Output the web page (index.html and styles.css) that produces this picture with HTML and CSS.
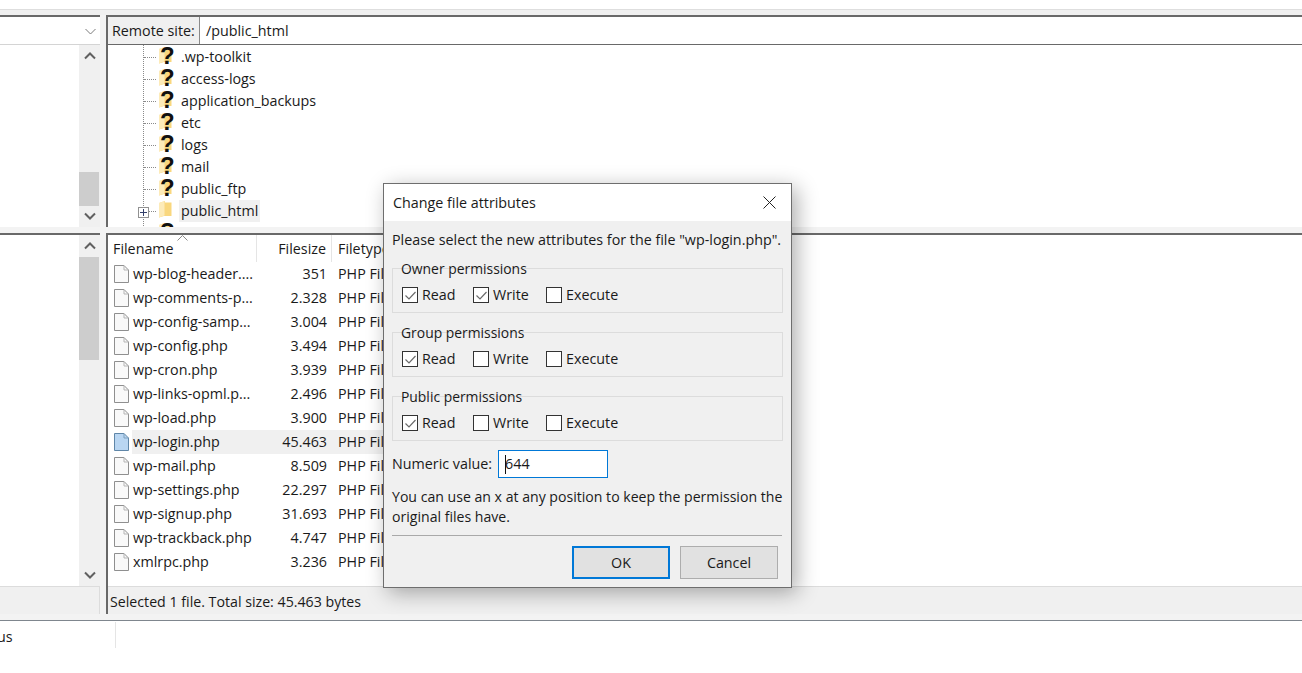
FILE: index.html
```html
<!DOCTYPE html>
<html lang="en">
<head>
<meta charset="utf-8">
<title>Change file attributes</title>
<link rel="stylesheet" href="styles.css">
</head>
<body>
<svg class="defs" width="0" height="0" aria-hidden="true">
  <symbol id="folder" viewBox="0 0 13 17">
    <path d="M0 2 L6 0 L6 1.5 L12.5 1.5 L12.5 15 L5 15 L0 16.5 Z" fill="#f9d77e"/>
    <path d="M0 2 L5.5 0 L5.5 14.5 L0 16.5 Z" fill="#fdebb9"/>
  </symbol>
  <symbol id="file" viewBox="0 0 15 18">
    <path d="M.5.5 H10 L14.5 5 V17.5 H.5 Z" fill="#f9f9f9" stroke="#8f8f8f"/>
    <path d="M10 .5 V5 H14.5" fill="none" stroke="#b5b5b5"/>
  </symbol>
  <symbol id="file-sel" viewBox="0 0 15 18">
    <path d="M.5.5 H10 L14.5 5 V17.5 H.5 Z" fill="#b9d6f2" stroke="#5f86a8"/>
    <path d="M10 .5 V5 H14.5" fill="none" stroke="#7d9fbd"/>
  </symbol>
  <symbol id="up" viewBox="0 0 12 8"><path d="M1 6.5 L6 1.5 L11 6.5" fill="none" stroke="#606060" stroke-width="2"/></symbol>
  <symbol id="down" viewBox="0 0 12 8"><path d="M1 1.5 L6 6.5 L11 1.5" fill="none" stroke="#606060" stroke-width="2"/></symbol>
  <symbol id="tick" viewBox="0 0 15 15"><path d="M2.5 7.5 L6 11 L12.5 4" fill="none" stroke="#6b6b6b" stroke-width="1.2"/></symbol>
</svg>

<div class="topstrip"></div>

<main class="panes">
  <section class="pane pane-local-top">
    <div class="addr addr-local">
      <svg class="combo-arrow" width="11" height="7" viewBox="0 0 11 7"><path d="M.5 1 L5.5 6 L10.5 1" fill="none" stroke="#7a7a7a"/></svg>
    </div>
    <div class="local-body">
      <div class="blank"></div>
      <div class="scrollbar">
        <svg class="sb-arrow" width="12" height="8"><use href="#up"/></svg>
        <div class="thumb-slot thumb-slot-tree"><div class="thumb thumb-tree"></div></div>
        <svg class="sb-arrow" width="12" height="8"><use href="#down"/></svg>
      </div>
    </div>
  </section>

  <section class="pane pane-remote-top">
    <div class="addr">
      <span class="addr-label">Remote site:</span>
      <span class="addr-value">/public_html</span>
    </div>
    <div class="tree">
      <div class="tree-row"><i class="dots"></i><span class="folder-q"><svg width="13" height="17"><use href="#folder"/></svg><b>?</b></span><span class="tree-name">.wp-toolkit</span></div>
      <div class="tree-row"><i class="dots"></i><span class="folder-q"><svg width="13" height="17"><use href="#folder"/></svg><b>?</b></span><span class="tree-name">access-logs</span></div>
      <div class="tree-row"><i class="dots"></i><span class="folder-q"><svg width="13" height="17"><use href="#folder"/></svg><b>?</b></span><span class="tree-name">application_backups</span></div>
      <div class="tree-row"><i class="dots"></i><span class="folder-q"><svg width="13" height="17"><use href="#folder"/></svg><b>?</b></span><span class="tree-name">etc</span></div>
      <div class="tree-row"><i class="dots"></i><span class="folder-q"><svg width="13" height="17"><use href="#folder"/></svg><b>?</b></span><span class="tree-name">logs</span></div>
      <div class="tree-row"><i class="dots"></i><span class="folder-q"><svg width="13" height="17"><use href="#folder"/></svg><b>?</b></span><span class="tree-name">mail</span></div>
      <div class="tree-row"><i class="dots"></i><span class="folder-q"><svg width="13" height="17"><use href="#folder"/></svg><b>?</b></span><span class="tree-name">public_ftp</span></div>
      <div class="tree-row"><i class="dots"></i><span class="plus"></span><span class="folder-q"><svg width="13" height="17"><use href="#folder"/></svg></span><span class="tree-name tree-sel">public_html</span></div>
      <div class="tree-row"><i class="dots"></i><span class="folder-q"><svg width="13" height="17"><use href="#folder"/></svg><b>?</b></span></div>
    </div>
  </section>

  <section class="pane pane-local-bottom">
    <div class="local-body">
      <div class="blank"></div>
      <div class="scrollbar">
        <svg class="sb-arrow" width="12" height="8"><use href="#up"/></svg>
        <div class="thumb-slot thumb-slot-list"><div class="thumb thumb-list"></div></div>
        <svg class="sb-arrow" width="12" height="8"><use href="#down"/></svg>
      </div>
    </div>
    <div class="statusbar statusbar-local"></div>
  </section>

  <section class="pane pane-remote-bottom">
    <div class="list">
      <div class="list-head">
        <span class="col-name">Filename<svg class="sort" width="11" height="6" viewBox="0 0 11 6"><path d="M.5 5.5 L5.5 .5 L10.5 5.5" fill="none" stroke="#8a8a8a"/></svg></span>
        <span class="col-size">Filesize</span>
        <span class="col-type">Filetype</span>
      </div>
      <div class="list-row"><svg width="15" height="18"><use href="#file"/></svg><span class="fname">wp-blog-header....</span><span class="fsize">351</span><span class="ftype">PHP File</span></div>
      <div class="list-row"><svg width="15" height="18"><use href="#file"/></svg><span class="fname">wp-comments-p...</span><span class="fsize">2.328</span><span class="ftype">PHP File</span></div>
      <div class="list-row"><svg width="15" height="18"><use href="#file"/></svg><span class="fname">wp-config-samp...</span><span class="fsize">3.004</span><span class="ftype">PHP File</span></div>
      <div class="list-row"><svg width="15" height="18"><use href="#file"/></svg><span class="fname">wp-config.php</span><span class="fsize">3.494</span><span class="ftype">PHP File</span></div>
      <div class="list-row"><svg width="15" height="18"><use href="#file"/></svg><span class="fname">wp-cron.php</span><span class="fsize">3.939</span><span class="ftype">PHP File</span></div>
      <div class="list-row"><svg width="15" height="18"><use href="#file"/></svg><span class="fname">wp-links-opml.p...</span><span class="fsize">2.496</span><span class="ftype">PHP File</span></div>
      <div class="list-row"><svg width="15" height="18"><use href="#file"/></svg><span class="fname">wp-load.php</span><span class="fsize">3.900</span><span class="ftype">PHP File</span></div>
      <div class="list-row list-row-sel"><svg width="15" height="18"><use href="#file-sel"/></svg><span class="fname">wp-login.php</span><span class="fsize">45.463</span><span class="ftype">PHP File</span></div>
      <div class="list-row"><svg width="15" height="18"><use href="#file"/></svg><span class="fname">wp-mail.php</span><span class="fsize">8.509</span><span class="ftype">PHP File</span></div>
      <div class="list-row"><svg width="15" height="18"><use href="#file"/></svg><span class="fname">wp-settings.php</span><span class="fsize">22.297</span><span class="ftype">PHP File</span></div>
      <div class="list-row"><svg width="15" height="18"><use href="#file"/></svg><span class="fname">wp-signup.php</span><span class="fsize">31.693</span><span class="ftype">PHP File</span></div>
      <div class="list-row"><svg width="15" height="18"><use href="#file"/></svg><span class="fname">wp-trackback.php</span><span class="fsize">4.747</span><span class="ftype">PHP File</span></div>
      <div class="list-row"><svg width="15" height="18"><use href="#file"/></svg><span class="fname">xmlrpc.php</span><span class="fsize">3.236</span><span class="ftype">PHP File</span></div>
    </div>
    <div class="statusbar">Selected 1 file. Total size: 45.463 bytes</div>
  </section>
</main>

<footer class="queue">
  <div class="queue-tab">us</div>
</footer>

<div class="dialog" role="dialog">
  <header class="dialog-title">
    <span>Change file attributes</span>
    <svg class="close" width="13" height="13" viewBox="0 0 13 13"><path d="M.5.5 L12.5 12.5 M12.5.5 L.5 12.5" stroke="#222" fill="none"/></svg>
  </header>
  <div class="dialog-body">
    <p class="intro">Please select the new attributes for the file "wp-login.php".</p>
    <fieldset class="perm">
      <legend>Owner permissions</legend>
      <label class="chk chk-r"><span class="box"><svg width="15" height="15"><use href="#tick"/></svg></span>Read</label>
      <label class="chk chk-w"><span class="box"><svg width="15" height="15"><use href="#tick"/></svg></span>Write</label>
      <label class="chk"><span class="box"></span>Execute</label>
    </fieldset>
    <fieldset class="perm">
      <legend>Group permissions</legend>
      <label class="chk chk-r"><span class="box"><svg width="15" height="15"><use href="#tick"/></svg></span>Read</label>
      <label class="chk chk-w"><span class="box"></span>Write</label>
      <label class="chk"><span class="box"></span>Execute</label>
    </fieldset>
    <fieldset class="perm">
      <legend>Public permissions</legend>
      <label class="chk chk-r"><span class="box"><svg width="15" height="15"><use href="#tick"/></svg></span>Read</label>
      <label class="chk chk-w"><span class="box"></span>Write</label>
      <label class="chk"><span class="box"></span>Execute</label>
    </fieldset>
    <div class="numeric">
      <span>Numeric value:</span>
      <span class="num-input"><i class="caret"></i>644</span>
    </div>
    <p class="hint">You can use an x at any position to keep the permission the original files have.</p>
    <div class="actions">
      <button class="btn btn-default" type="button">OK</button>
      <button class="btn" type="button">Cancel</button>
    </div>
  </div>
</div>
</body>
</html>
```

FILE: styles.css
```css
* { box-sizing: border-box; }
html, body { margin: 0; padding: 0; }
body {
  width: 1302px;
  height: 673px;
  overflow: hidden;
  position: relative;
  background: #fff;
  color: #1a1a1a;
  font: 14.3px/20px "Open Sans", "Noto Sans", sans-serif;
}
.defs { position: absolute; }

.topstrip {
  margin-top: 9px;
  height: 6px;
  background: #f0f0f0;
  border-top: 1px solid #dedede;
}

.panes {
  display: grid;
  grid-template-columns: 100px 1196px;
  grid-template-rows: 212px 381px;
  column-gap: 6px;
  row-gap: 6px;
  padding-bottom: 6px;
  background: #f3f3f3;
  height: 605px;
  width: 1302px;
}
.pane {
  background: #fff;
  border-top: 2px solid #696969;
  overflow: hidden;
  display: flex;
  flex-direction: column;
}
.pane-remote-top, .pane-remote-bottom { border-left: 2px solid #696969; }

.addr {
  height: 28px;
  flex: none;
  display: flex;
  border-bottom: 1px solid #696969;
  background: #fff;
  position: relative;
}
.addr-local { border-bottom-color: #d4d4d4; }
.combo-arrow { position: absolute; right: 4px; top: 11px; }
.addr-label {
  width: 92px;
  padding: 4px 0 0 4px;
  background: #f0f0f0;
  border-right: 1px solid #8a8a8a;
  white-space: nowrap;
}
.addr-value { padding: 4px 0 0 6px; }

.local-body { flex: 1; display: flex; min-height: 0; }
.blank { flex: 1; }
.scrollbar {
  width: 21px;
  background: #f0f0f0;
  display: flex;
  flex-direction: column;
  align-items: center;
  padding: 7px 0;
}
.sb-arrow { flex: none; }
.thumb-slot { flex: 1; width: 100%; display: flex; flex-direction: column; }
.thumb { background: #cdcdcd; margin-right: 1px; }
.thumb-slot-tree { justify-content: flex-end; padding-bottom: 6px; }
.thumb-tree { height: 34px; }
.thumb-slot-list { padding-top: 7px; }
.thumb-list { height: 103px; }

.tree {
  flex: 1;
  overflow: hidden;
  padding-top: 1px;
  position: relative;
  background-image: linear-gradient(#8a8a8a 50%, transparent 50%);
  background-size: 1px 2px;
  background-repeat: repeat-y;
  background-position: 35px 0;
}
.tree-row {
  height: 22px;
  display: flex;
  align-items: center;
  position: relative;
  padding-left: 51px;
}
.dots {
  position: absolute;
  left: 36px;
  top: 11px;
  width: 12px;
  border-top: 1px dotted #8a8a8a;
}
.folder-q {
  position: relative;
  width: 13px;
  height: 17px;
  flex: none;
  align-self: flex-start;
  margin-top: 1px;
}
.folder-q svg { display: block; }
.folder-q b {
  position: absolute;
  left: 1px;
  top: -4px;
  width: 14px;
  text-align: center;
  font: bold 24px/26px "Liberation Sans", sans-serif;
  color: #111;
}
.tree-name { margin-left: 7px; padding: 0 2px; line-height: 22px; }
.tree-sel { background: #f0f0f0; }
.plus {
  position: absolute;
  left: 30px;
  top: 7px;
  width: 11px;
  height: 11px;
  border: 1px solid #919191;
  background:
    linear-gradient(#33406b, #33406b) center / 7px 1px no-repeat,
    linear-gradient(#33406b, #33406b) center / 1px 7px no-repeat,
    #fff;
}

.list { flex: 1; min-height: 0; overflow: hidden; }
.list-head {
  height: 27px;
  display: grid;
  grid-template-columns: 149px 75px 100px;
}
.list-head span { padding-top: 4px; position: relative; }
.col-name { padding-left: 5px; border-right: 1px solid #e5e5e5; }
.col-size { text-align: right; padding-right: 5px; border-right: 1px solid #e5e5e5; }
.col-type { padding-left: 6px; white-space: nowrap; }
.sort { position: absolute; left: 69px; top: 0; }
.list-row {
  height: 24px;
  display: grid;
  grid-template-columns: 24px 125px 75px 100px;
  align-items: center;
  padding-left: 0;
}
.list-row svg { margin-left: 6px; }
.fname { padding-left: 1px; white-space: nowrap; overflow: hidden; }
.fsize { text-align: right; padding-right: 5px; }
.ftype { padding-left: 6px; white-space: nowrap; }
.list-row-sel .fname,
.list-row-sel .fsize,
.list-row-sel .ftype { background: #f0f0f0; line-height: 24px; }

.statusbar {
  height: 28px;
  flex: none;
  background: #f0f0f0;
  border-top: 1px solid #dcdcdc;
  padding: 5px 0 0 2px;
  font-size: 14.2px;
  white-space: nowrap;
}
.statusbar-local { border-right: 1px solid #dcdcdc; }

.queue {
  border-top: 1px solid #7f868e;
  height: 40px;
  padding-top: 1px;
}
.queue-tab {
  width: 116px;
  height: 26px;
  border-right: 1px solid #e5e5e5;
  text-indent: -3px;
  overflow: hidden;
  padding-top: 5px;
  white-space: nowrap;
}

.dialog {
  position: absolute;
  left: 383px;
  top: 183px;
  width: 409px;
  height: 405px;
  background: #f0f0f0;
  border: 1px solid #6e6e6e;
  box-shadow: 5px 5px 20px rgba(0, 0, 0, .32);
  display: flex;
  flex-direction: column;
}
.dialog-title {
  height: 37px;
  flex: none;
  background: #fff;
  padding: 9px 15px 0 9px;
  display: flex;
  justify-content: space-between;
}
.close { margin-top: 3px; }
.dialog-body { flex: 1; padding: 9px 8px 0; }
.intro { margin: 0; white-space: nowrap; }
.perm {
  margin: 0 0 19px;
  padding: 0 0 0 10px;
  height: 45px;
  width: 391px;
  border: 1px solid #dcdcdc;
  position: relative;
  display: block;
}
.intro + .perm { margin-top: 18px; }
.perm legend {
  position: absolute;
  left: 7px;
  top: -10px;
  padding: 0 1px;
  font-size: 13.9px;
  line-height: 20px;
  white-space: nowrap;
}
.chk {
  position: absolute;
  top: 16px;
  display: flex;
  align-items: center;
  height: 20px;
  left: 153px;
  white-space: nowrap;
}
.chk.chk-r { left: 9px; }
.chk.chk-w { left: 80px; }
.box {
  width: 16px;
  height: 16px;
  border: 1px solid #333;
  background: #fff;
  margin-right: 4px;
  display: block;
}
.box svg { display: block; }

.numeric {
  display: flex;
  align-items: center;
  margin-top: -10px;
  height: 28px;
}
.num-input {
  margin-left: 6px;
  width: 110px;
  height: 28px;
  background: #fff;
  border: 1px solid #0078d7;
  padding: 3px 0 0 6px;
  position: relative;
}
.caret {
  position: absolute;
  left: 6px;
  top: 4px;
  height: 19px;
  border-left: 1px solid #111;
}
.hint { margin: 9px 0 0; width: 396px; font-size: 14.1px; }
.actions {
  margin-top: 8px;
  width: 390px;
  border-top: 1px solid #a9a9a9;
  padding-top: 10px;
  display: flex;
  justify-content: flex-end;
  gap: 10px;
  padding-right: 4px;
}
.btn {
  width: 98px;
  height: 33px;
  padding: 0;
  background: #e1e1e1;
  border: 1px solid #adadad;
  color: #1a1a1a;
  font: inherit;
}
.btn-default { border: 2px solid #0078d7; }
```
